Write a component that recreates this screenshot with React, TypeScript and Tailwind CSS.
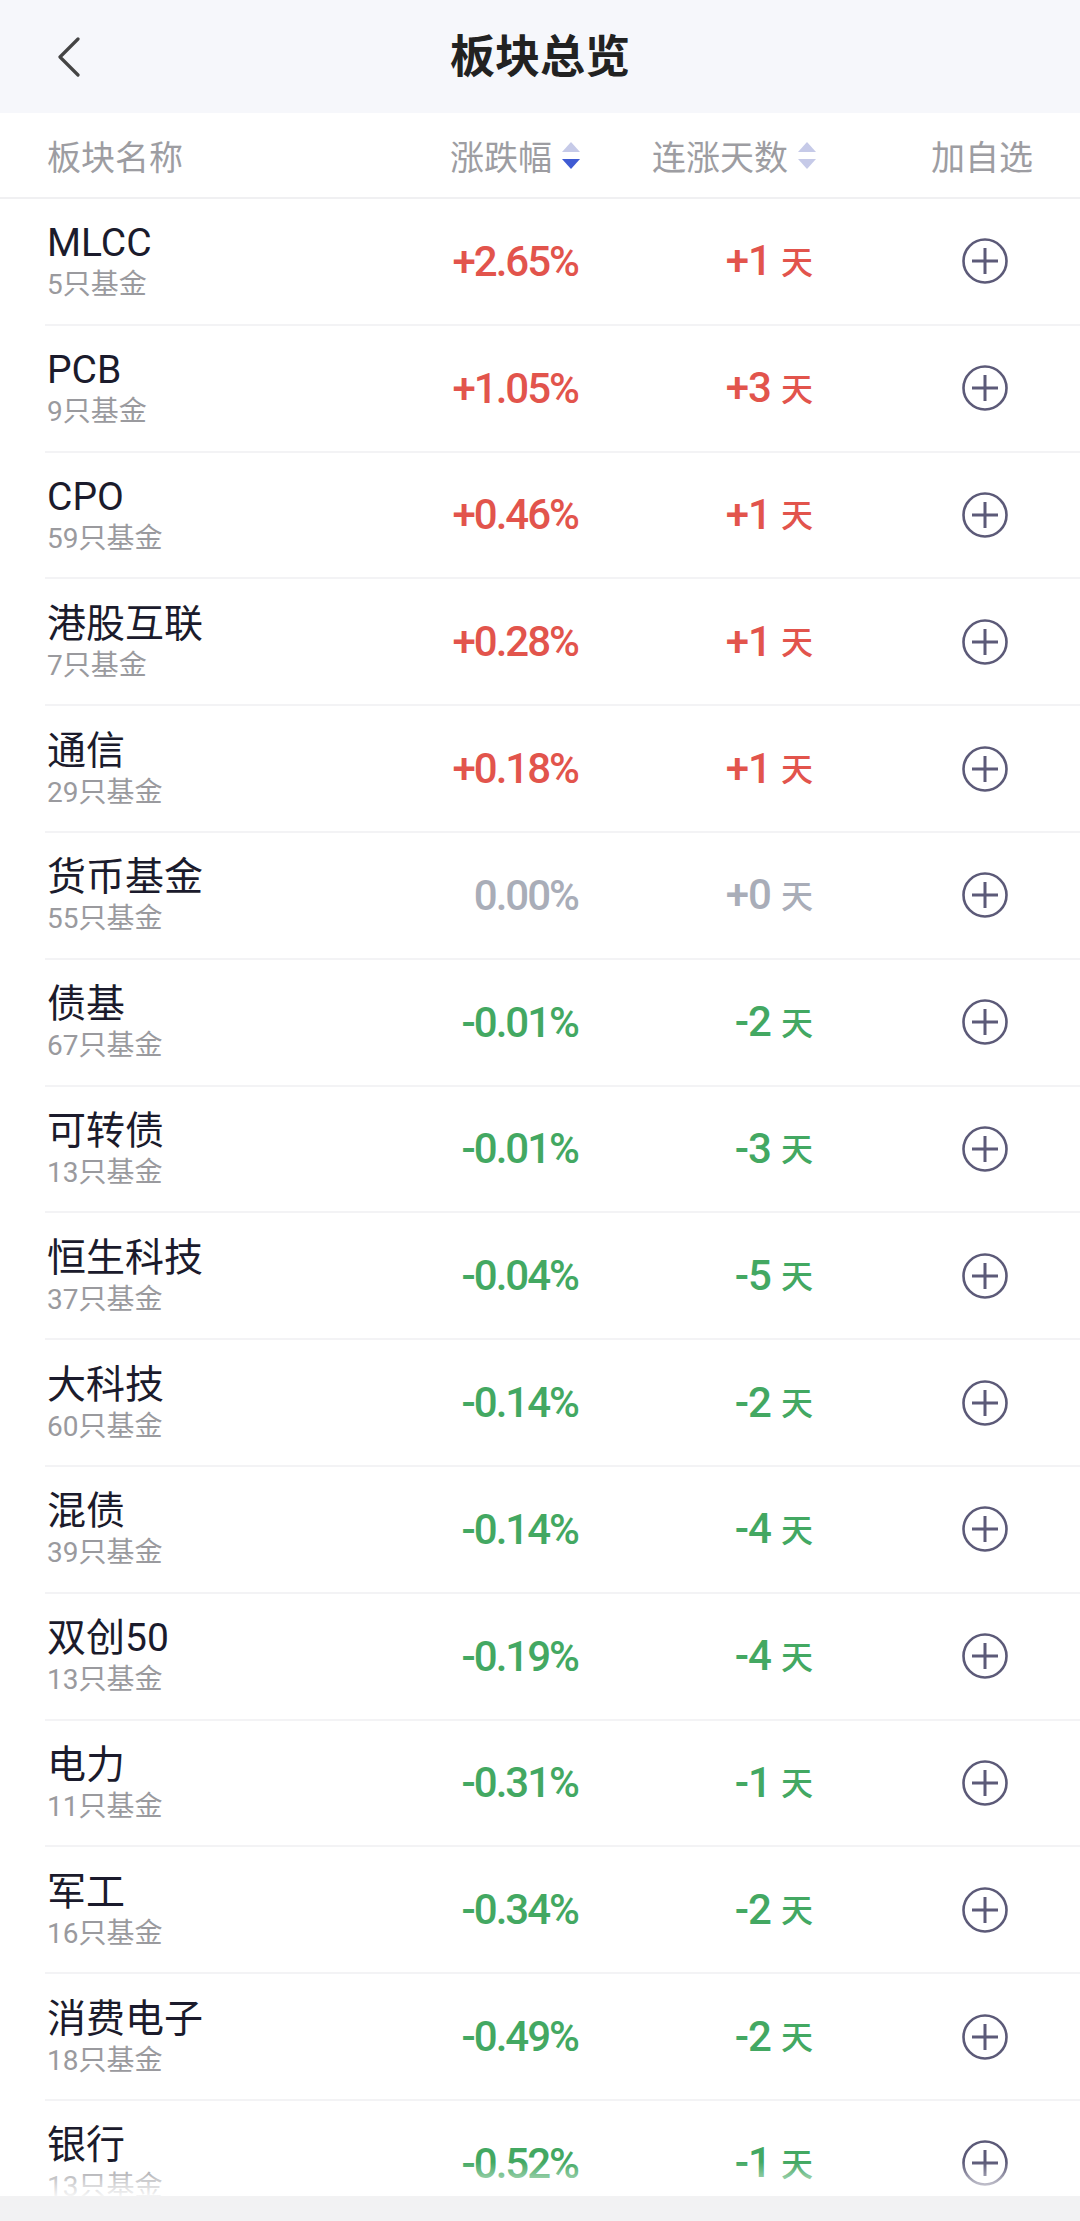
import React from 'react';

type Sector = {
  name: string;
  count: number;
  change: string;
  days: string;
  trend: 'up' | 'down' | 'flat';
};

const sectors: Sector[] = [
  { name: 'MLCC', count: 5, change: '+2.65%', days: '+1', trend: 'up' },
  { name: 'PCB', count: 9, change: '+1.05%', days: '+3', trend: 'up' },
  { name: 'CPO', count: 59, change: '+0.46%', days: '+1', trend: 'up' },
  { name: '港股互联', count: 7, change: '+0.28%', days: '+1', trend: 'up' },
  { name: '通信', count: 29, change: '+0.18%', days: '+1', trend: 'up' },
  { name: '货币基金', count: 55, change: '0.00%', days: '+0', trend: 'flat' },
  { name: '债基', count: 67, change: '-0.01%', days: '-2', trend: 'down' },
  { name: '可转债', count: 13, change: '-0.01%', days: '-3', trend: 'down' },
  { name: '恒生科技', count: 37, change: '-0.04%', days: '-5', trend: 'down' },
  { name: '大科技', count: 60, change: '-0.14%', days: '-2', trend: 'down' },
  { name: '混债', count: 39, change: '-0.14%', days: '-4', trend: 'down' },
  { name: '双创50', count: 13, change: '-0.19%', days: '-4', trend: 'down' },
  { name: '电力', count: 11, change: '-0.31%', days: '-1', trend: 'down' },
  { name: '军工', count: 16, change: '-0.34%', days: '-2', trend: 'down' },
  { name: '消费电子', count: 18, change: '-0.49%', days: '-2', trend: 'down' },
  { name: '银行', count: 13, change: '-0.52%', days: '-1', trend: 'down' },
];

const trendColor = {
  up: 'text-[#e2544c]',
  down: 'text-[#43a862]',
  flat: 'text-[#a9adb8]',
};

const SortArrows = ({ active = false }: { active?: boolean }) => (
  <svg width="18" height="27" viewBox="0 0 18 27" className="ml-[10px]">
    <polygon points="9,0 18,10 0,10" fill="#c6cae8" />
    <polygon points="0,17 18,17 9,27" fill={active ? '#3f5bd3' : '#c6cae8'} />
  </svg>
);

const PlusCircle = () => (
  <svg width="46" height="46" viewBox="0 0 46 46" fill="none">
    <circle cx="23" cy="23" r="21.5" stroke="#5c5a78" strokeWidth="2.6" />
    <path d="M10 23h26M23 10v26" stroke="#5c5a78" strokeWidth="3" />
  </svg>
);

export default function App() {
  return (
    <div className="w-[1080px] h-[2221px] overflow-hidden flex flex-col bg-white font-['Roboto','Noto_Sans_CJK_SC',sans-serif]">
      {/* Header */}
      <div className="h-[113px] shrink-0 bg-[#f6f7fb] flex items-center">
        <div className="w-[160px] pl-[57px] flex items-center">
          <svg width="24" height="40" viewBox="0 0 24 40" fill="none">
            <path d="M21 2L3 20l18 18" stroke="#444444" strokeWidth="3.2" strokeLinecap="round" strokeLinejoin="round" />
          </svg>
        </div>
        <div className="flex-1 text-center text-[45px] font-bold text-[#222222] font-['Noto_Sans_CJK_SC',sans-serif] pb-[6px]">
          板块总览
        </div>
        <div className="w-[160px]" />
      </div>

      {/* Column header */}
      <div className="h-[86px] shrink-0 flex items-center border-b-2 border-[#f0f0f2] text-[34px] text-[#9d9da2] font-['Noto_Sans_CJK_SC',sans-serif]">
        <div className="w-[400px] pl-[47px]">板块名称</div>
        <div className="w-[180px] flex items-center justify-end">
          涨跌幅
          <SortArrows active />
        </div>
        <div className="w-[236px] flex items-center justify-end">
          连涨天数
          <SortArrows />
        </div>
        <div className="pl-[115px]">加自选</div>
      </div>

      {/* List */}
      <div className="flex-1 overflow-hidden relative">
        {sectors.map((s) => (
          <div key={s.name} className="pl-[45px]">
            <div className="h-[126.8px] flex items-center border-b-2 border-[#f3f3f5]">
              <div className="w-[355px] pl-[2px] flex flex-col">
                <span className="text-[39px] leading-[48px] text-[#1b1b2c]">{s.name}</span>
                <span className="text-[28px] leading-[36px] text-[#9a9a9e]">{s.count}只基金</span>
              </div>
              <div
                className={`w-[178px] text-right text-[42px] font-medium tracking-[-2px] ${trendColor[s.trend]}`}
              >
                {s.change}
              </div>
              <div className={`w-[235px] flex items-center justify-end ${trendColor[s.trend]}`}>
                <span className="text-[42px] leading-[50px] font-medium tracking-[-1px]">{s.days}</span>
                <span className="text-[32px] leading-[50px] font-medium ml-[10px] mb-[3px] font-['Noto_Sans_CJK_SC',sans-serif]">
                  天
                </span>
              </div>
              <div className="pl-[149px] flex items-center">
                <PlusCircle />
              </div>
            </div>
          </div>
        ))}
        <div className="absolute bottom-0 left-0 right-0 h-[34px] bg-gradient-to-b from-white/0 to-white/90" />
      </div>

      {/* Bottom bar */}
      <div className="h-[25px] shrink-0 bg-[#f2f2f3]" />
    </div>
  );
}
